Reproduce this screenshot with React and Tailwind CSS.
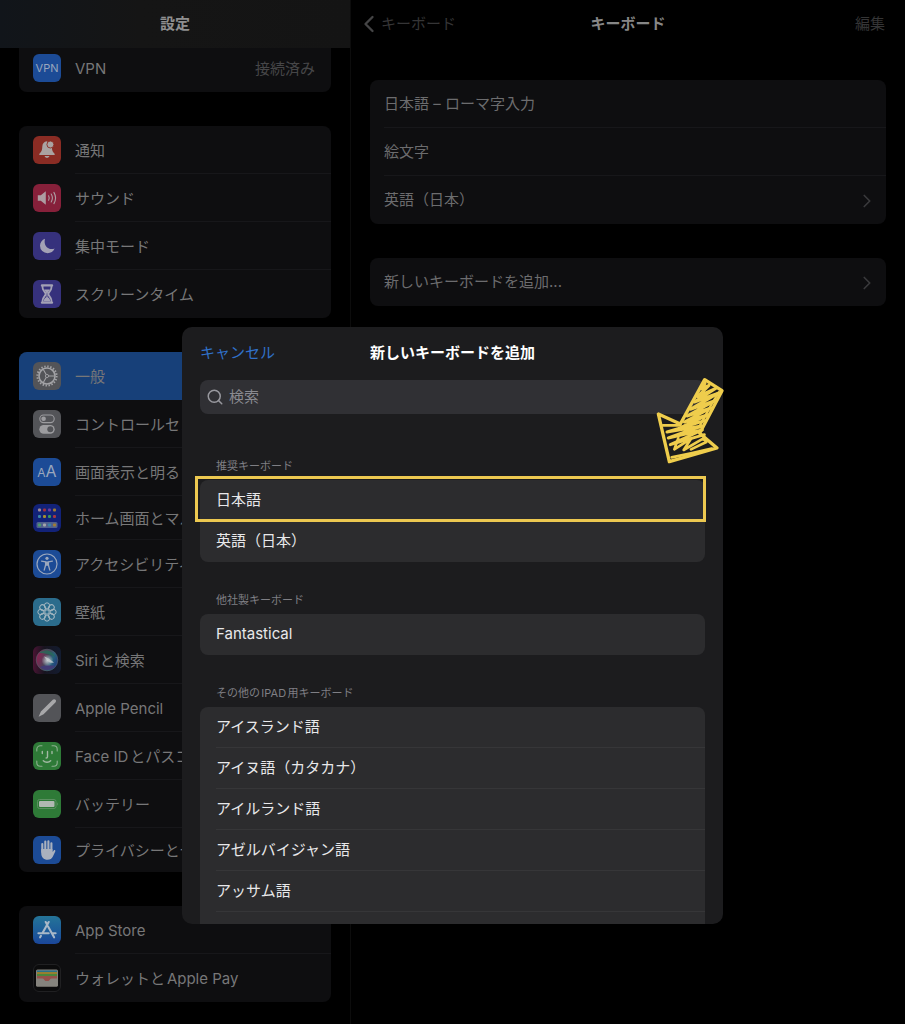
import { ChevronLeft, ChevronRight, Search } from 'lucide-react';

const FONT = "font-['Inter','Noto_Sans_CJK_JP',sans-serif]";

// Rounded square behind every sidebar glyph
function Tile({ className, children }) {
  return (
    <span className={`flex size-7 shrink-0 items-center justify-center overflow-hidden rounded-md ${className}`}>
      {children}
    </span>
  );
}

function Glyph({ children }) {
  return (
    <svg viewBox="0 0 28 28" className="size-7 shrink-0" fill="none" aria-hidden="true">
      {children}
    </svg>
  );
}

const VpnIcon = () => (
  <Tile className="bg-[#1c4b96] text-[11px] text-[#9aa7bd]">VPN</Tile>
);

const BellIcon = () => (
  <Tile className="bg-[#8a2c24]">
    <Glyph>
      <path d="M14 5.2c-3 .3-4.600 2.500-4.700 5.300-.1 3-.5 4.600-2 6.300-.8.9-1.100 1.300-1 2.100h15.400c.1-.8-.2-1.200-1-2.100-1.200-1.400-1.700-2.900-1.800-5.300z" fill="#aaa3a2" />
      <path d="M11.600 20h4.800c-.2 1.100-1.200 1.800-2.400 1.800s-2.200-.7-2.400-1.800z" fill="#aaa3a2" />
      <circle cx="17.400" cy="8.500" r="3.500" fill="#aaa3a2" stroke="#8a2c24" strokeWidth="0.900" />
    </Glyph>
  </Tile>
);

const SoundIcon = () => (
  <Tile className="bg-[#86203a]">
    <Glyph>
      <path d="M4.800 11.300h3l5-4.100v13.600l-5-4.100h-3z" fill="#ad9da2" />
      <path d="M15.600 11.800c.8 1.400.8 3 0 4.400M18.200 10c1.500 2.500 1.500 5.500 0 8M20.900 8.400c2.100 3.500 2.100 7.700 0 11.200" stroke="#ad9da2" strokeWidth="1.100" strokeLinecap="round" />
    </Glyph>
  </Tile>
);

const MoonIcon = () => (
  <Tile className="bg-[#36317c]">
    <Glyph>
      <path d="M12 6.700c-2.900 1-5 3.800-5 7a7.500 7.500 0 0 0 7.600 7.500c3.200 0 5.900-1.900 7-4.700-5.800 2.100-11.500-2.300-9.600-9.800z" fill="#a3a1b5" />
    </Glyph>
  </Tile>
);

const HourglassIcon = () => (
  <Tile className="bg-[#36317c]">
    <Glyph>
      <path d="M9 5.400h10M9 22.600h10" stroke="#a3a1b5" strokeWidth="2.400" strokeLinecap="round" />
      <path d="M9.600 5.500v2.200c0 2.800 3 4.300 3 6.300s-3 3.500-3 6.300v2.200M18.400 5.500v2.200c0 2.800-3 4.300-3 6.300s3 3.500 3 6.300v2.200" stroke="#a3a1b5" strokeWidth="1.800" />
      <path d="M11.200 9.500h5.600c-.5 1.500-2.200 2.500-2.300 4.500v3c1.400.8 2.600 2 2.800 4.500h-6.600c.2-2.500 1.400-3.700 2.800-4.500v-3c-.1-2-1.800-3-2.300-4.500z" fill="#a3a1b5" />
    </Glyph>
  </Tile>
);

const GearIcon = () => (
  <Tile className="bg-[#535458]">
    <Glyph>
      <circle cx="14" cy="14" r="9.600" stroke="#a3a3a6" strokeWidth="2" strokeDasharray="1.400 1.613" />
      <circle cx="14" cy="14" r="8" stroke="#a3a3a6" strokeWidth="1.600" />
      <circle cx="14" cy="14" r="1.600" stroke="#a3a3a6" strokeWidth="0.900" />
      <path d="M15.600 14h5.700M13.200 12.600l-2.900-5.100M13.200 15.400l-2.900 5.100" stroke="#a3a3a6" strokeWidth="1.100" />
    </Glyph>
  </Tile>
);

const ControlIcon = () => (
  <Tile className="bg-[#535458]">
    <Glyph>
      <rect x="6.800" y="5" width="14.400" height="7.600" rx="3.800" stroke="#9c9c9f" strokeWidth="1.100" />
      <circle cx="10.600" cy="8.800" r="2.300" fill="#9c9c9f" />
      <rect x="6.300" y="14.900" width="15.400" height="8.800" rx="4.400" fill="#9c9c9f" />
      <circle cx="17.300" cy="19.300" r="3" fill="#535458" />
    </Glyph>
  </Tile>
);

const TextSizeIcon = () => (
  <Tile className="bg-[#1c4b96] text-[#9aa7bd]">
    <span className="flex items-baseline leading-7">
      <span className="text-[12px]">A</span>
      <span className="text-[16px]">A</span>
    </span>
  </Tile>
);

const HomeIcon = () => {
  const dots = ['#a08d98', '#a13341', '#6a3fa3', '#a07c35', '#3a86a5', '#a58d31', '#38975c', '#a33842'];
  return (
    <Tile className="bg-[#122278]">
      <Glyph>
        {dots.map((c, i) => (
          <rect key={i} x={5 + (i % 4) * 5} y={4.5 + Math.floor(i / 4) * 6.500} width="3" height="3" rx="1" fill={c} />
        ))}
        <rect x="3.500" y="18" width="21" height="6" rx="1.500" fill="#50608e" />
        {['#4c9a69', '#a5a5a9', '#3a82a8', '#a07c35'].map((c, i) => (
          <rect key={c} x={5 + i * 5} y="19.500" width="3" height="3" rx="1" fill={c} />
        ))}
      </Glyph>
    </Tile>
  );
};

const AccessibilityIcon = () => (
  <Tile className="bg-[#1c4b96]">
    <Glyph>
      <circle cx="14" cy="14" r="10" stroke="#9aa7bd" strokeWidth="1.200" />
      <circle cx="14" cy="8.300" r="1.600" fill="#9aa7bd" />
      <path d="M8.600 11.200l4 .6v3.200l-1.400 5.200M19.400 11.200l-4 .6v3.200l1.400 5.200" stroke="#9aa7bd" strokeWidth="1.300" strokeLinecap="round" strokeLinejoin="round" />
      <path d="M12.200 11.400h3.600v4.400h-3.600z" fill="#9aa7bd" />
    </Glyph>
  </Tile>
);

const WallpaperIcon = () => (
  <Tile className="bg-[#2b6c8c]">
    <Glyph>
      <circle cx="14" cy="14" r="2.200" stroke="#a2b6c0" strokeWidth="1" />
      {[0, 45, 90, 135, 180, 225, 270, 315].map((a) => (
        <ellipse key={a} cx="14" cy="7.900" rx="2.700" ry="3.100" stroke="#a2b6c0" strokeWidth="1" transform={`rotate(${a} 14 14)`} />
      ))}
    </Glyph>
  </Tile>
);

const SiriIcon = () => (
  <Tile className="bg-[#17141f]">
    <Glyph>
      <defs>
        <linearGradient id="siri" x1="4" y1="10" x2="24" y2="18" gradientUnits="userSpaceOnUse">
          <stop offset="0" stopColor="#8b2150" />
          <stop offset="0.450" stopColor="#4b4258" />
          <stop offset="0.700" stopColor="#27647a" />
          <stop offset="1" stopColor="#203d7d" />
        </linearGradient>
        <linearGradient id="siri-edge" x1="0" y1="0" x2="28" y2="0" gradientUnits="userSpaceOnUse">
          <stop offset="0" stopColor="#4a1433" />
          <stop offset="0.400" stopColor="#17141f" />
          <stop offset="1" stopColor="#131c30" />
        </linearGradient>
        <radialGradient id="siri-glow">
          <stop offset="0" stopColor="#c5cbd0" />
          <stop offset="1" stopColor="#c5cbd0" stopOpacity="0" />
        </radialGradient>
      </defs>
      <rect width="28" height="28" fill="url(#siri-edge)" />
      <circle cx="14" cy="14" r="10.800" fill="url(#siri)" stroke="#54636d" strokeWidth="0.600" />
      <path d="M6 7c6-5 13-3 16 4-5-3-10-4-16-4z" fill="#266a59" opacity="0.800" />
      <path d="M7 21c5-2 9-2 15-1-4 5-11 5-15 1z" fill="#423b75" />
      <circle cx="14.500" cy="14.500" r="6" fill="url(#siri-glow)" />
      <path d="M11 10.500c4 1 6 3 10 6-4 1-6-.5-10-6z" fill="#c5cbd0" opacity="0.800" />
    </Glyph>
  </Tile>
);

const PencilIcon = () => (
  <Tile className="bg-[#535458]">
    <Glyph>
      <path d="M19.800 5.800c.8-.8 2-.7 2.700 0s.7 1.900-.1 2.700L10.600 20.200l-5 2.600 2.300-5.200z" fill="#a8a8aa" />
    </Glyph>
  </Tile>
);

const FaceIdIcon = () => (
  <Tile className="bg-[#2e7a37]">
    <Glyph>
      <path d="M3.800 9V7.300a3.500 3.500 0 0 1 3.500-3.500H9M19 3.800h1.700a3.500 3.500 0 0 1 3.500 3.500V9M24.200 19v1.700a3.500 3.500 0 0 1-3.500 3.500H19M9 24.200H7.300a3.500 3.500 0 0 1-3.500-3.500V19" stroke="#8eaf91" strokeWidth="1.100" strokeLinecap="round" />
      <path d="M9.300 9.500v2M19 9.500v2M14.500 9.500v5.300c0 .8-.4 1.200-1.400 1.200M10.300 18.700c2 2 5.400 2 7.400 0" stroke="#a3b9a4" strokeWidth="1.400" strokeLinecap="round" />
    </Glyph>
  </Tile>
);

const BatteryIcon = () => (
  <Tile className="bg-[#2e7a37]">
    <Glyph>
      <rect x="4.500" y="9.500" width="18.500" height="9" rx="2" stroke="#5c9061" strokeWidth="1" />
      <rect x="6" y="11" width="15.500" height="6" rx="1" fill="#b0b8b1" />
      <path d="M24.200 12.500c1.200.4 1.200 2.600 0 3z" fill="#5c9061" />
    </Glyph>
  </Tile>
);

const HandIcon = () => (
  <Tile className="bg-[#1c4b96]">
    <Glyph>
      <path d="M9.300 8v8M12.300 5.500v10M15.400 5.200v10M18.400 7.200v9" stroke="#a9b1be" strokeWidth="2.100" strokeLinecap="round" />
      <path d="M8.250 13h11.200v3.300l1.300-1.900c.7-1 2.100-.2 1.500 1l-2.500 5.300c-1 2.100-2.600 3-5.200 3-3.800 0-6.300-2.600-6.300-6.300z" fill="#a9b1be" />
    </Glyph>
  </Tile>
);

const AppStoreIcon = () => (
  <Tile className="bg-gradient-to-b from-[#257498] to-[#1b469a]">
    <Glyph>
      <path d="M12.700 6l1.800 3.100M15.700 6L9.500 17M15.200 10.800l5.900 10.500M5.400 17.300h10.300M19 17.300h3.600M8 19.800L7.100 21.300" stroke="#a8b8c8" strokeWidth="2.100" strokeLinecap="round" />
    </Glyph>
  </Tile>
);

const WalletIcon = () => (
  <Tile className="border border-[#202022] bg-[#0b0b0c]">
    <Glyph>
      <rect x="3" y="5.500" width="22" height="17" rx="1.500" fill="#85837d" />
      <path d="M4 6.500h20v3H4z" fill="#28718a" />
      <path d="M4 8h20v3H4z" fill="#977e30" />
      <path d="M4 10h20v3H4z" fill="#4b863c" />
      <path d="M4 12h20v5H4z" fill="#95504a" />
      <path d="M3 14.500h6.800c1.300 0 1.700 3 4.200 3s2.900-3 4.200-3H25V21c0 .8-.7 1.500-1.500 1.500h-19c-.8 0-1.500-.7-1.500-1.500z" fill="#85837d" />
    </Glyph>
  </Tile>
);

const SIDEBAR_GROUPS = [
  [
    { label: '通知', icon: BellIcon },
    { label: 'サウンド', icon: SoundIcon },
    { label: '集中モード', icon: MoonIcon },
    { label: 'スクリーンタイム', icon: HourglassIcon },
  ],
  [
    { label: '一般', icon: GearIcon, selected: true },
    { label: 'コントロールセン', icon: ControlIcon },
    { label: '画面表示と明るさ', icon: TextSizeIcon },
    { label: 'ホーム画面とマル', icon: HomeIcon, compact: true },
    { label: 'アクセシビリティ', icon: AccessibilityIcon },
    { label: '壁紙', icon: WallpaperIcon },
    { label: 'Siriと検索', icon: SiriIcon },
    { label: 'Apple Pencil', icon: PencilIcon },
    { label: 'Face IDとパスコ', icon: FaceIdIcon },
    { label: 'バッテリー', icon: BatteryIcon },
    { label: 'プライバシーとセ', icon: HandIcon, compact: true },
  ],
  [
    { label: 'App Store', icon: AppStoreIcon },
    { label: 'ウォレットとApple Pay', icon: WalletIcon },
  ],
];

const OTHER_KEYBOARDS = [
  'アイスランド語',
  'アイヌ語（カタカナ）',
  'アイルランド語',
  'アゼルバイジャン語',
  'アッサム語',
];

function SidebarRow({ label, icon: Icon, value, selected, compact, last }) {
  return (
    <button
      type="button"
      className={`flex w-full items-center gap-3.5 pl-3.5 text-left ${compact ? 'h-11' : 'h-12'} ${selected ? 'bg-[#174079]' : ''}`}
    >
      <Icon />
      <span
        className={`flex h-full min-w-0 flex-1 items-center justify-between border-b pt-1 pr-4 whitespace-nowrap ${
          last || selected ? 'border-transparent' : 'border-[#17171a]'
        }`}
      >
        <span>{label}</span>
        {value && <span className="text-[#464648]">{value}</span>}
      </span>
    </button>
  );
}

function Sidebar() {
  return (
    <aside className="w-[351px] shrink-0 border-r border-[#0c0c0c] text-[15px] text-[#777778]">
      <header className="relative z-10 flex h-12 items-center justify-center bg-gradient-to-r from-[#11151a] via-[#151515] via-40% to-[#141414]">
        <h1 className="font-bold text-[#8f8f8f]">設定</h1>
      </header>
      <nav className="flex flex-col gap-[34px] px-[19px]">
        <div className="-mt-1 overflow-hidden rounded-b-lg bg-[#0e0e10]">
          <SidebarRow label="VPN" icon={VpnIcon} value="接続済み" last />
        </div>
        {SIDEBAR_GROUPS.map((rows, i) => (
          <div key={i} className="overflow-hidden rounded-lg bg-[#0e0e10]">
            {rows.map((row, j) => (
              <SidebarRow key={row.label} {...row} last={j === rows.length - 1} />
            ))}
          </div>
        ))}
      </nav>
    </aside>
  );
}

function DetailRow({ label, arrow, last }) {
  return (
    <button type="button" className="block h-12 w-full pl-3.5 text-left">
      <span className={`flex h-full items-center justify-between border-b pt-0.5 pr-2 ${last ? 'border-transparent' : 'border-[#17171a]'}`}>
        {label}
        {arrow && <ChevronRight size={22} strokeWidth={1.800} className="text-[#3a3a3c]" />}
      </span>
    </button>
  );
}

function Detail() {
  return (
    <main className="min-w-0 flex-1 text-[15px] text-[#6c6c6e]">
      <header className="grid h-12 grid-cols-3 items-center px-5 text-[#353536]">
        <button type="button" className="-ml-4 flex items-center text-left">
          <ChevronLeft size={28} strokeWidth={2} className="-mr-0.5 text-[#454546]" />
          キーボード
        </button>
        <h2 className="text-center font-bold text-[#868686]">キーボード</h2>
        <button type="button" className="text-right">編集</button>
      </header>
      <div className="flex flex-col gap-[34px] px-[19px] pt-8">
        <div className="rounded-lg bg-[#0e0e10]">
          <DetailRow label="日本語 – ローマ字入力" />
          <DetailRow label="絵文字" />
          <DetailRow label="英語（日本）" arrow last />
        </div>
        <div className="rounded-lg bg-[#0e0e10]">
          <DetailRow label="新しいキーボードを追加..." arrow last />
        </div>
      </div>
    </main>
  );
}

// `open` lets the list run on to the bottom edge of the dialog
function KeyboardSection({ title, items, highlighted, open }) {
  return (
    <section className={open ? 'flex flex-1 flex-col' : ''}>
      <h3 className="pb-1.5 pl-4 text-[11px] leading-4 text-[#7f7f84]">{title}</h3>
      <ul className={`bg-[#2c2c2e] ${open ? 'flex-1 rounded-t-lg' : 'rounded-lg'}`}>
        {items.map((item, i) => (
          <li key={item} className="relative">
            <button type="button" className="block h-[41px] w-full pl-4 text-left">
              <span
                className={`flex h-full items-center border-b ${
                  !open && i === items.length - 1 ? 'border-transparent' : 'border-[#363638]'
                }`}
              >
                {item}
              </span>
            </button>
            {item === highlighted && (
              <span className="pointer-events-none absolute -top-1 -right-px -bottom-px -left-[5px] border-3 border-[#ecc850]" />
            )}
          </li>
        ))}
      </ul>
    </section>
  );
}

// Hand-drawn marker arrow
function Arrow() {
  return (
    <svg viewBox="0 0 270 300" className="pointer-events-none absolute top-[43px] -right-2 h-[100px] w-[90px]" fill="none" aria-hidden="true">
      <g stroke="#efcd4c" strokeLinecap="round" strokeLinejoin="round">
        <path d="M191 29L243 62L176 190L228 234L85 275L52 132L118 162Z" strokeWidth="10" />
        <path
          d="M192 40L182 56L204 46L170 80L226 54L160 96L230 70L148 118L222 92L138 138L210 114L130 156L202 134L120 172L192 152L78 186L182 168L82 204L184 180L88 224L190 194"
          strokeWidth="9"
        />
        <path d="M66 166L118 166M112 204L100 238L150 206L128 240L186 206L196 216L150 238M92 262L150 250L212 236" strokeWidth="8" />
        <path d="M234 66L211 104L174 172" strokeWidth="7" />
      </g>
    </svg>
  );
}

function AddKeyboardDialog() {
  return (
    <div className="absolute inset-0 z-20 flex justify-center pt-[327px] pb-[100px]">
      <div role="dialog" aria-labelledby="dialog-title" className="relative w-full max-w-[541px]">
        <div className="flex h-full flex-col overflow-hidden rounded-[10px] bg-[#1c1c1e] px-[18px] text-[15px] text-[#e8e8ea]">
          <header className="grid h-[53px] shrink-0 grid-cols-[1fr_auto_1fr] items-center">
            <button type="button" className="text-left text-[#3070c8]">キャンセル</button>
            <h2 id="dialog-title" className="font-bold text-white">新しいキーボードを追加</h2>
          </header>
          <label className="flex h-[34px] shrink-0 items-center gap-[5px] rounded-lg bg-[#303034] px-1.5 text-[#98989e]">
            <Search size={18} strokeWidth={2} />
            <input
              type="text"
              aria-label="検索"
              placeholder="検索"
              className="min-w-0 flex-1 bg-transparent outline-none placeholder:text-[#8a8a90]"
            />
          </label>
          <div className="-mx-[18px] flex min-h-0 flex-1 flex-col gap-[30px] overflow-hidden px-[18px] pt-11">
            <KeyboardSection title="推奨キーボード" items={['日本語', '英語（日本）']} highlighted="日本語" />
            <KeyboardSection title="他社製キーボード" items={['Fantastical']} />
            <KeyboardSection title="その他のIPAD用キーボード" items={OTHER_KEYBOARDS} open />
          </div>
        </div>
        <Arrow />
      </div>
    </div>
  );
}

export default function App() {
  return (
    <div lang="ja" className={`relative min-h-screen overflow-hidden bg-black [text-autospace:normal] ${FONT}`}>
      <div className="flex min-h-screen">
        <Sidebar />
        <Detail />
      </div>
      <AddKeyboardDialog />
    </div>
  );
}
